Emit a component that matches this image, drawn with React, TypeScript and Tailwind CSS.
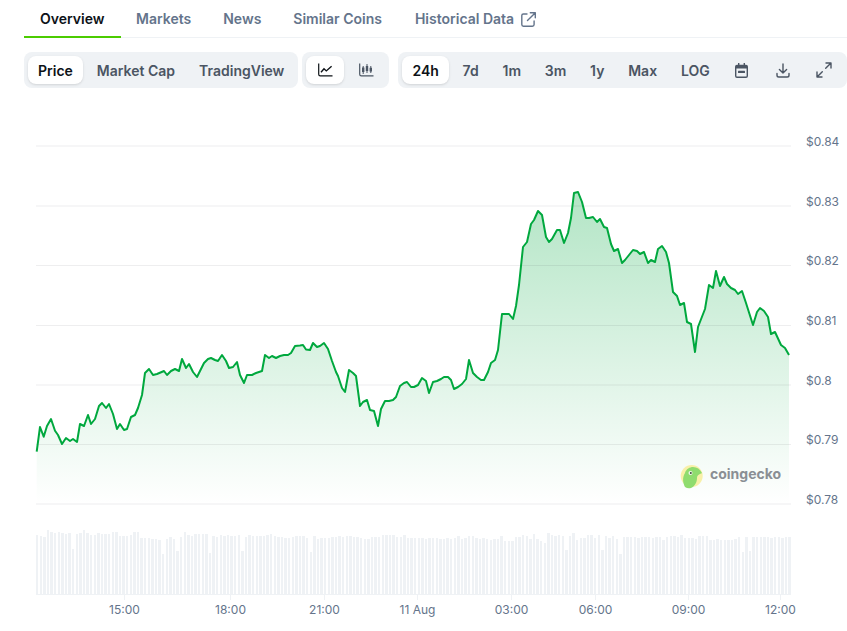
const tabs = ["Markets", "News", "Similar Coins"];
const kinds = ["Market Cap", "TradingView"];
const ranges = ["7d", "1m", "3m", "1y", "Max", "LOG"];

const linePoints: [number, number][] = [
  [36.7, 451.7], [40, 427], [43.7, 436.7], [47, 426], [51, 419], [55, 430.7], [58, 435], [62, 444], [66, 438],
  [70, 441], [73, 439], [77, 442], [80, 424], [84, 426], [88, 415], [91, 424], [95, 419], [99, 406], [102, 403],
  [106, 408], [109, 404], [113, 414], [117, 429], [120, 424], [124, 430], [127, 429], [131, 417], [135, 415],
  [138, 408], [142, 395], [145, 373], [149, 369], [153, 375], [157, 374], [164, 371], [167, 375], [171, 371],
  [175, 369], [179, 371], [182, 359], [186, 368], [189, 364], [193, 372], [197, 377], [200, 371], [204, 363],
  [208, 359], [211, 358], [215, 360], [218, 361], [222, 355], [226, 361], [229, 368], [233, 367], [237, 362],
  [240, 375], [244, 383], [247, 375], [252, 375], [256, 373], [259, 372], [262, 371], [265, 355], [269, 358],
  [272, 356], [276, 358], [280, 356], [284, 355], [288, 355], [291, 353], [295, 346], [300, 345.5], [303, 345],
  [306, 349.5], [310, 350], [313, 343], [317, 347], [320, 346], [324, 343], [328, 349], [332, 361], [336, 372],
  [338, 376], [342, 388], [345, 392], [349, 370], [353, 373], [356, 376], [360, 406], [363, 402], [367, 400],
  [370, 410], [374, 411], [378, 426], [381, 409], [385, 401], [389, 401], [393, 400], [396, 397], [400, 386],
  [404, 383], [407, 382], [411, 387], [414, 387], [418, 385], [422, 378], [426, 381], [429, 393], [433, 382],
  [437, 381], [441, 379], [444, 377], [448, 377], [451, 380], [454, 389], [458, 387], [462, 384], [466, 379],
  [469, 360], [473, 373], [477, 377], [481, 380], [484, 380], [488, 372], [491, 363], [495, 360], [498, 350],
  [502, 314], [509, 314], [513, 319], [516, 306], [519, 285], [523, 247], [527, 242], [531, 224], [534, 220],
  [538, 211], [542, 215], [546, 237], [549, 242], [552, 239], [557, 230], [560, 230], [564, 243], [568, 233],
  [571, 218], [574, 193], [578, 192], [582, 202], [586, 218], [589, 218], [593, 217], [597, 222], [600, 219],
  [604, 227], [607, 228], [611, 244], [614, 251], [618, 249], [622, 263], [625, 260], [629, 255], [633, 250],
  [637, 251], [640, 254], [644, 252], [648, 263], [651, 260], [655, 262], [658, 249], [662, 246], [666, 252],
  [669, 263], [673, 292], [677, 296], [680, 305], [684, 303], [687, 322], [691, 324], [695, 352], [698, 327],
  [705, 309], [709, 285], [713, 288], [716, 271], [720, 286], [724, 277], [727, 284], [731, 288], [735, 290],
  [738, 294], [742, 291], [746, 303], [753, 325], [757, 312], [760, 308], [764, 311], [768, 317], [771, 334],
  [775, 332], [781, 345], [785, 348], [789, 355],
];

const barTops = [
  535, 536, 537, 530, 532, 533, 532, 533, 534, 533, 549, 534, 533, 530, 533, 535, 535, 533, 534, 534, 534, 532, 532,
  536, 536, 536, 535, 532, 532, 538, 538, 538, 539, 539, 540, 554, 539, 537, 539, 551, 537, 532, 535, 536, 534, 534,
  534, 534, 553, 536, 537, 535, 536, 535, 536, 536, 535, 551, 537, 535, 536, 536, 536, 536, 535, 534, 536, 537, 537,
  538, 538, 537, 536, 536, 536, 538, 552, 536, 539, 538, 538, 538, 537, 537, 536, 537, 536, 536, 537, 537, 538, 539,
  539, 537, 537, 537, 535, 535, 535, 535, 537, 537, 535, 538, 538, 538, 538, 538, 539, 538, 538, 538, 539, 539, 538,
  539, 538, 536, 539, 538, 536, 536, 538, 539, 538, 539, 540, 539, 539, 536, 541, 541, 541, 537, 537, 535, 536, 539,
  534, 539, 541, 543, 533, 535, 536, 535, 536, 550, 536, 533, 540, 538, 538, 535, 535, 538, 535, 550, 536, 538, 536,
  539, 554, 537, 537, 537, 537, 538, 537, 537, 537, 538, 537, 537, 540, 537, 536, 536, 537, 535, 538, 538, 538, 539,
  536, 536, 536, 540, 540, 539, 540, 540, 540, 540, 539, 537, 552, 537, 551, 537, 537, 537, 537, 537, 538, 537, 537,
  538, 537, 537,
];

const gridLines = [146, 206, 265.5, 325.5, 385, 444.5, 504];
const priceLabels = ["$0.84", "$0.83", "$0.82", "$0.81", "$0.8", "$0.79", "$0.78"];
const timeLabels: [number, string][] = [
  [124.5, "15:00"], [230.5, "18:00"], [324.5, "21:00"], [417.5, "11 Aug"],
  [511.5, "03:00"], [595.5, "06:00"], [688.5, "09:00"], [780.5, "12:00"],
];

const linePath = linePoints.map(([x, y], i) => `${i === 0 ? "M" : "L"}${x} ${y}`).join(" ");

function LineIcon() {
  return (
    <svg width="15" height="14" viewBox="0 0 15 14" fill="none" stroke="currentColor" strokeWidth="1.2">
      <path d="M.7 .5V11.2c0 1 .6 1.6 1.6 1.6H14.5" />
      <path d="M3 9.2 6 5.8l2.3 2.1L13.6 3.2" strokeWidth="1.4" />
    </svg>
  );
}

function CandleIcon() {
  return (
    <svg width="15" height="14" viewBox="0 0 15 14" fill="none" stroke="currentColor">
      <path d="M.7 .5V11.2c0 1 .6 1.6 1.6 1.6H14.5" strokeWidth="1.2" />
      <path d="M4.2 3v8M8 1v9M11.8 3v7" strokeWidth="1" />
      <path d="M4.2 4.5v4.5M8 3v5M11.8 4.8v3.6" strokeWidth="2.4" />
    </svg>
  );
}

function CalendarIcon() {
  return (
    <svg width="13" height="15" viewBox="0 0 13 15" fill="currentColor">
      <path d="M3 0h1.4v1.7h4.2V0H10v1.7h1A2 2 0 0 1 13 3.7V13a2 2 0 0 1-2 2H2a2 2 0 0 1-2-2V3.7a2 2 0 0 1 2-2h1V0Zm-1.6 5.5V13c0 .3.3.6.6.6h9c.3 0 .6-.3.6-.6V5.5H1.4Z" />
      <rect x="3" y="7.7" width="7" height="2.4" rx=".5" />
    </svg>
  );
}

function DownloadIcon() {
  return (
    <svg width="14" height="15" viewBox="0 0 14 15" fill="none" stroke="currentColor" strokeWidth="1.4" strokeLinecap="round" strokeLinejoin="round">
      <path d="M7 1v9M3.4 6.5 7 10l3.6-3.5" />
      <path d="M1 10.5v1.7c0 1 .8 1.8 1.8 1.8h8.4c1 0 1.8-.8 1.8-1.8v-1.7" />
    </svg>
  );
}

function ExpandIcon() {
  return (
    <svg width="16" height="16" viewBox="0 0 16 16" fill="none" stroke="currentColor" strokeWidth="1.4" strokeLinecap="round" strokeLinejoin="round">
      <path d="M10 1h5v5M15 1 9.7 6.3" />
      <path d="M1 10v5h5M1 15l5.3-5.3" />
    </svg>
  );
}

function ExternalIcon() {
  return (
    <svg width="15" height="15" viewBox="0 0 15 15" fill="none" stroke="currentColor" strokeWidth="1.4" strokeLinecap="round" strokeLinejoin="round">
      <path d="M6 2H2.4C1.4 2 .8 2.7.8 3.6v9c0 1 .6 1.6 1.6 1.6h9c1 0 1.7-.6 1.7-1.6V9" />
      <path d="M9.3 .8h5v5M14.3 .8 6.5 8.6" />
    </svg>
  );
}

export default function App() {
  return (
    <div className="h-[631px] w-[847px] overflow-hidden bg-white [font-family:Inter,sans-serif]">
      <div className="pl-6">
        <div className="flex h-[38px] border-b border-[#eff2f5] text-sm font-semibold whitespace-nowrap text-[#64748b]">
          <div className="-mr-px flex h-[38px] w-[97px] items-center border-b-2 border-[#4bcc00] pt-px pl-4 text-[#0d1217]">Overview</div>
          {tabs.map((t) => (
            <div key={t} className="flex h-[37px] items-center px-4 pt-px">{t}</div>
          ))}
          <div className="ml-px flex h-[37px] items-center gap-[7px] px-4 pt-px">
            Historical Data
            <ExternalIcon />
          </div>
        </div>

        <div className="mt-3.5 flex h-9 text-sm font-semibold whitespace-nowrap text-[#4b5563]">
          <div className="flex items-stretch gap-1 rounded-lg bg-[#eff2f5] p-1">
            <div className="flex items-center rounded-lg bg-white px-2.5 pt-px text-[#0d1217] shadow-sm">Price</div>
            {kinds.map((k) => (
              <div key={k} className="flex items-center px-2.5 pt-px">{k}</div>
            ))}
          </div>
          <div className="ml-1 flex items-stretch gap-[3px] rounded-lg bg-[#eff2f5] p-1">
            <div className="flex w-[38px] items-center justify-center rounded-lg bg-white text-[#0d1217] shadow-sm">
              <LineIcon />
            </div>
            <div className="flex w-[38px] items-center justify-center">
              <CandleIcon />
            </div>
          </div>
          <div className="ml-[9px] flex flex-1 items-stretch gap-[3.8px] rounded-lg bg-[#eff2f5] p-1">
            <div className="flex items-center rounded-lg bg-white px-2.5 pt-px text-[#0d1217] shadow-sm">24h</div>
            {ranges.map((r) => (
              <div key={r} className="flex items-center px-2.5 pt-px">{r}</div>
            ))}
            <div className="flex w-[37px] items-center justify-center"><CalendarIcon /></div>
            <div className="flex w-[37px] items-center justify-center"><DownloadIcon /></div>
            <div className="flex w-[37px] items-center justify-center"><ExpandIcon /></div>
          </div>
        </div>
      </div>

      <svg width="847" height="543" viewBox="0 88 847 543" className="block">
        <defs>
          <linearGradient id="area" gradientUnits="userSpaceOnUse" x1="0" y1="192" x2="0" y2="504">
            <stop offset="0" stopColor="#00a83e" stopOpacity="0.3" />
            <stop offset="1" stopColor="#00a83e" stopOpacity="0" />
          </linearGradient>
        </defs>

        <path d={`${linePath} L789 504 L36.7 504 Z`} fill="url(#area)" />
        {gridLines.map((y) => (
          <line key={y} x1="36" x2="791" y1={y} y2={y} stroke="#0d1217" strokeOpacity="0.07" />
        ))}
        <path d={linePath} fill="none" stroke="#00a83e" strokeWidth="2" strokeLinejoin="round" />

        {barTops.map((top, i) => {
          const left = Math.round(36 + i * 3.6);
          const right = Math.round(36 + i * 3.6 + 2.4);
          return <rect key={i} x={left} y={top} width={right - left} height={594 - top} fill="#eff2f5" shapeRendering="crispEdges" />;
        })}
        <line x1="36" x2="791" y1="594.5" y2="594.5" stroke="#eff2f5" />
        {timeLabels.map(([x, label]) => (
          <g key={label}>
            <line x1={x} x2={x} y1="594" y2="600" stroke="#eff2f5" />
            <text x={x} y="610.5" textAnchor="middle" dominantBaseline="middle" className="fill-[#64748b] text-xs">{label}</text>
          </g>
        ))}
        {priceLabels.map((label, i) => (
          <text key={label} x="806" y={gridLines[i] - 3.5} dominantBaseline="middle" className="fill-[#64748b] text-xs">{label}</text>
        ))}

        <circle cx="691.7" cy="476" r="11" fill="#f8f0a8" />
        <path d="M685 487c-2-4-3-9 0-14 1-4 5-6 8-6 4 0 7 2 9 6-2 1-5 2-5 5 0 4-2 8-6 10-2 .6-4 .4-6-1Z" fill="#8fdc6e" />
        <circle cx="690.5" cy="473" r="2" fill="#f3f6ef" />
        <circle cx="690.8" cy="473" r="1" fill="#3e4a3a" />
        <text x="710" y="475.5" dominantBaseline="middle" className="fill-[#8a8f94] text-sm font-bold">coingecko</text>
      </svg>
    </div>
  );
}
